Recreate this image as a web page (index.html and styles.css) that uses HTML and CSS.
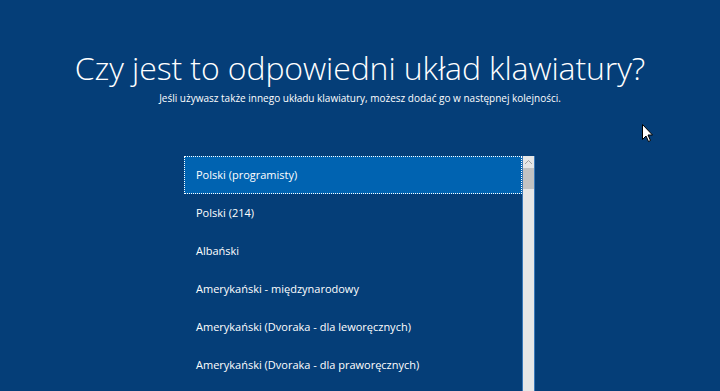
FILE: index.html
```html
<!DOCTYPE html>
<html lang="pl">
<head>
    <meta charset="UTF-8">
    <title>Układ klawiatury</title>
    <link rel="stylesheet" href="styles.css">
</head>
<body>
    <div class="oobe">
        <h1 class="title">Czy jest to odpowiedni układ klawiatury?</h1>
        <p class="subtitle">Jeśli używasz także innego układu klawiatury, możesz dodać go w następnej kolejności.</p>

        <div class="layout-list">
            <ul class="items">
                <li class="item selected">Polski (programisty)</li>
                <li class="item">Polski (214)</li>
                <li class="item">Albański</li>
                <li class="item">Amerykański - międzynarodowy</li>
                <li class="item">Amerykański (Dvoraka - dla leworęcznych)</li>
                <li class="item">Amerykański (Dvoraka - dla praworęcznych)</li>
            </ul>
            <div class="scrollbar">
                <div class="arrow-up">
                    <svg width="9" height="6" viewBox="0 0 9 6"><path d="M1 5 L4.5 1.5 L8 5" fill="none" stroke="#a0a0a0" stroke-width="1"/></svg>
                </div>
                <div class="thumb"></div>
            </div>
        </div>
    </div>

    <svg class="cursor" width="12" height="19" viewBox="0 0 12 19">
        <path d="M0.5 0.5 L0.5 15.5 L4 12 L6.5 17.5 L8.5 16.5 L6 11 L10.5 11 Z" fill="#fff" stroke="#000" stroke-width="1"/>
    </svg>
</body>
</html>
```

FILE: styles.css
```css
html, body {
    margin: 0;
    height: 100%;
}
body {
    background-color: #053e78;
    font-family: "Open Sans", "Noto Sans", sans-serif;
    color: #fff;
    overflow: hidden;
}
.oobe {
    display: flex;
    flex-direction: column;
    align-items: center;
    padding-top: 44px;
}
.title {
    margin: 0;
    font-weight: 300;
    font-size: 32px;
    line-height: 48px;
    letter-spacing: -0.1px;
}
.subtitle {
    margin: -2px 0 0;
    font-size: 10px;
    line-height: 16px;
}
.layout-list {
    display: flex;
    margin-top: 50px;
    margin-left: -1px;
    width: 351px;
    height: 240px;
}
.items {
    list-style: none;
    margin: 0;
    padding: 0;
    flex: 1;
}
.item {
    height: 38px;
    line-height: 38px;
    padding-left: 12px;
    font-size: 11px;
    box-sizing: border-box;
}
.item.selected {
    background-color: #0063b1;
    border: 1px dotted #fff;
    line-height: 36px;
    padding-left: 11px;
}
.scrollbar {
    width: 11px;
    background-color: #e6e6e6;
    border-left: 1px solid #3a78b8;
    border-right: 1px solid #3a78b8;
    display: flex;
    flex-direction: column;
}
.arrow-up {
    height: 12px;
    display: flex;
    justify-content: center;
    align-items: center;
}
.thumb {
    height: 21px;
    background-color: #c2c2c2;
}
.cursor {
    position: absolute;
    left: 642px;
    top: 124px;
}
```
